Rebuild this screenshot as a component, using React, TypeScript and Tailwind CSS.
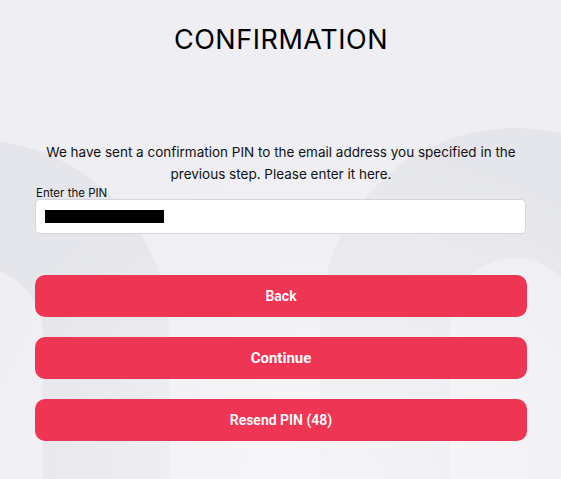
const Watermark = () => (
  <svg
    className="pointer-events-none absolute inset-0 h-full w-full"
    viewBox="0 0 561 479"
    preserveAspectRatio="none"
    aria-hidden
  >
    <defs>
      <radialGradient id="glow" cx="0.62" cy="1" r="0.7">
        <stop offset="0" stopColor="#ffffff" stopOpacity="0.6" />
        <stop offset="1" stopColor="#ffffff" stopOpacity="0" />
      </radialGradient>
    </defs>
    <path
      d="M -221 479 V 335 A 195 195 0 0 1 169 335 V 479 H 43 V 335 A 69 69 0 0 0 -95 335 V 479 Z"
      fill="#e5e6eb"
    />
    <path
      d="M 320 479 V 323 A 195 195 0 0 1 710 323 V 479 H 580 V 323 A 65 65 0 0 0 450 323 V 479 Z"
      fill="#e5e6eb"
    />
    <rect x="0" y="0" width="561" height="479" fill="url(#glow)" />
  </svg>
);

const buttons = [
  { label: "Back", className: "text-[14px] font-semibold" },
  { label: "Continue", className: "text-[15px] font-bold" },
  { label: "Resend PIN (48)", className: "text-[14px] font-semibold" },
];

export default function App() {
  return (
    <div className="relative h-[479px] w-full overflow-hidden bg-[#eeeef3] font-['Inter',sans-serif]">
      <Watermark />
      <div className="relative flex flex-col pl-[35px] pr-[34px] pt-6">
        <h1 className="text-center text-[27px] font-normal leading-[31px] tracking-[0.02em] text-black">
          CONFIRMATION
        </h1>

        <p className="mt-[86px] text-center text-[13.5px] leading-[22px] text-[#111]">
          We have sent a confirmation PIN to the email address you specified in the
          <br />
          previous step. Please enter it here.
        </p>

        <label className="mt-[2px] pl-px text-[11.5px] leading-[12px] text-[#111]">
          Enter the PIN
        </label>
        <div className="mr-px flex h-[35px] items-center rounded-[5px] border border-[#d6d6da] bg-white px-[9px]">
          <div className="h-[13px] w-[119px] bg-black" />
        </div>

        <div className="mt-[41px] flex flex-col gap-5">
          {buttons.map((b) => (
            <button
              key={b.label}
              className={`flex h-[42px] items-center justify-center rounded-[10px] bg-[#ee3553] font-['Roboto',sans-serif] text-white ${b.className}`}
            >
              {b.label}
            </button>
          ))}
        </div>
      </div>
    </div>
  );
}
